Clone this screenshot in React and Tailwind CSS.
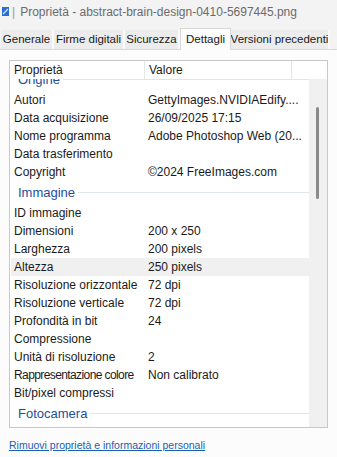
import React from 'react';

const groups = [
  {
    title: 'Origine',
    rows: [
      ['Autori', 'GettyImages.NVIDIAEdify....'],
      ['Data acquisizione', '26/09/2025 17:15'],
      ['Nome programma', 'Adobe Photoshop Web (20...'],
      ['Data trasferimento', ''],
      ['Copyright', '©2024 FreeImages.com'],
    ],
  },
  {
    title: 'Immagine',
    rows: [
      ['ID immagine', ''],
      ['Dimensioni', '200 x 250'],
      ['Larghezza', '200 pixels'],
      ['Altezza', '250 pixels'],
      ['Risoluzione orizzontale', '72 dpi'],
      ['Risoluzione verticale', '72 dpi'],
      ['Profondità in bit', '24'],
      ['Compressione', ''],
      ['Unità di risoluzione', '2'],
      ['Rappresentazione colore', 'Non calibrato', true],
      ['Bit/pixel compressi', ''],
    ],
  },
  { title: 'Fotocamera', rows: [] },
];

const tabs = [
  { label: 'Generale', w: 'w-[53px]' },
  { label: 'Firme digitali', w: 'w-[71px]' },
  { label: 'Sicurezza', w: 'w-[55px]' },
  { label: 'Dettagli', w: 'w-[51px]' },
  { label: 'Versioni precedenti', w: 'w-[99px]' },
];

const GroupHeader = ({ title }) => (
  <div className="h-[23px] flex items-center pl-[8px] pr-[7px]">
    <span className="text-[13px] text-[#1e4e9c]">{title}</span>
    <div className="flex-1 h-px bg-[#dfe6ee] ml-[3px]" />
  </div>
);

const Row = ({ label, value, tight }) => (
  <div
    className={`h-[18px] flex items-center text-[12px] text-[#1a1a1a] mr-[17px] ${
      label === 'Altezza' ? 'bg-[#f0f0f0]' : ''
    }`}
  >
    <span
      className={`w-[137px] shrink-0 pl-[3px] whitespace-nowrap ${tight ? 'tracking-[-0.6px]' : ''}`}
    >
      {label}
    </span>
    <span className="whitespace-nowrap">{value}</span>
  </div>
);

export default function App() {
  return (
    <div
      className="w-[337px] h-[457px] bg-[#f3f3f3] overflow-hidden flex flex-col"
      style={{ fontFamily: '"Liberation Sans", Arial, sans-serif' }}
    >
      {/* Title */}
      <div className="h-[23px] shrink-0 flex items-center pl-[2px] text-[12px] text-[#6b6b6b] whitespace-nowrap">
        <svg width="7" height="9" viewBox="0 0 7 9" className="mr-[3px] shrink-0">
          <rect width="7" height="9" fill="#2a6fd1" />
          <path d="M1 7 L6 2" stroke="#cfe3ff" strokeWidth="1.2" />
        </svg>
        <span className="text-[#999] mr-[5px]">|</span>
        <span>Proprietà - abstract-brain-design-0410-5697445.png</span>
      </div>

      {/* Tabs */}
      <div className="h-[26px] shrink-0 flex items-end pl-[1px] text-[11.5px] text-[#1a1a1a] whitespace-nowrap">
        {tabs.map((t) =>
          t.label === 'Dettagli' ? (
            <div
              key={t.label}
              className={`${t.w} h-[22px] bg-[#fcfcfc] border border-b-0 border-[#d9d9d9] flex justify-center pt-[2px] -mb-px relative`}
            >
              {t.label}
            </div>
          ) : (
            <div
              key={t.label}
              className={`${t.w} h-[19px] bg-[#ececec] border-r-[2px] border-[#fafafa] flex items-center justify-center`}
            >
              {t.label}
            </div>
          )
        )}
      </div>

      {/* Panel */}
      <div className="flex-1 bg-[#fcfcfc] border-t border-[#d9d9d9] px-[9px] pt-[10px] flex flex-col">
        <div className="h-[368px] shrink-0 border border-[#c9c9c9] bg-white relative overflow-hidden flex flex-col">
          {/* Header */}
          <div className="h-[18px] flex items-center text-[12px] text-[#1a1a1a] relative z-10 bg-white shrink-0">
            <span className="w-[135px] pl-[4px] border-r border-[#e5e5e5] h-full flex items-center">
              Proprietà
            </span>
            <span className="w-[147px] pl-[4px] border-r border-[#e5e5e5] h-full flex items-center">
              Valore
            </span>
          </div>
          {/* Body, scrolled */}
          <div className="flex-1 overflow-hidden">
            <div className="-mt-[11px]">
              {groups.map((g) => (
                <div key={g.title}>
                  <GroupHeader title={g.title} />
                  {g.rows.map(([l, v, tight]) => (
                    <div key={l} className="pl-[1px]">
                      <Row label={l} value={v} tight={tight} />
                    </div>
                  ))}
                </div>
              ))}
            </div>
          </div>
          {/* Scrollbar */}
          <div className="absolute right-0 top-0 bottom-0 w-[18px] bg-[#f0f0f0]">
            <div className="absolute left-[7px] top-[46px] w-[3px] h-[92px] bg-[#8a8a8a] rounded-full" />
          </div>
        </div>
        <div className="mt-[9px] text-[10.5px] leading-[16px]">
          <span className="text-[#1a5fb4] underline">
            Rimuovi proprietà e informazioni personali
          </span>
        </div>
      </div>
    </div>
  );
}
